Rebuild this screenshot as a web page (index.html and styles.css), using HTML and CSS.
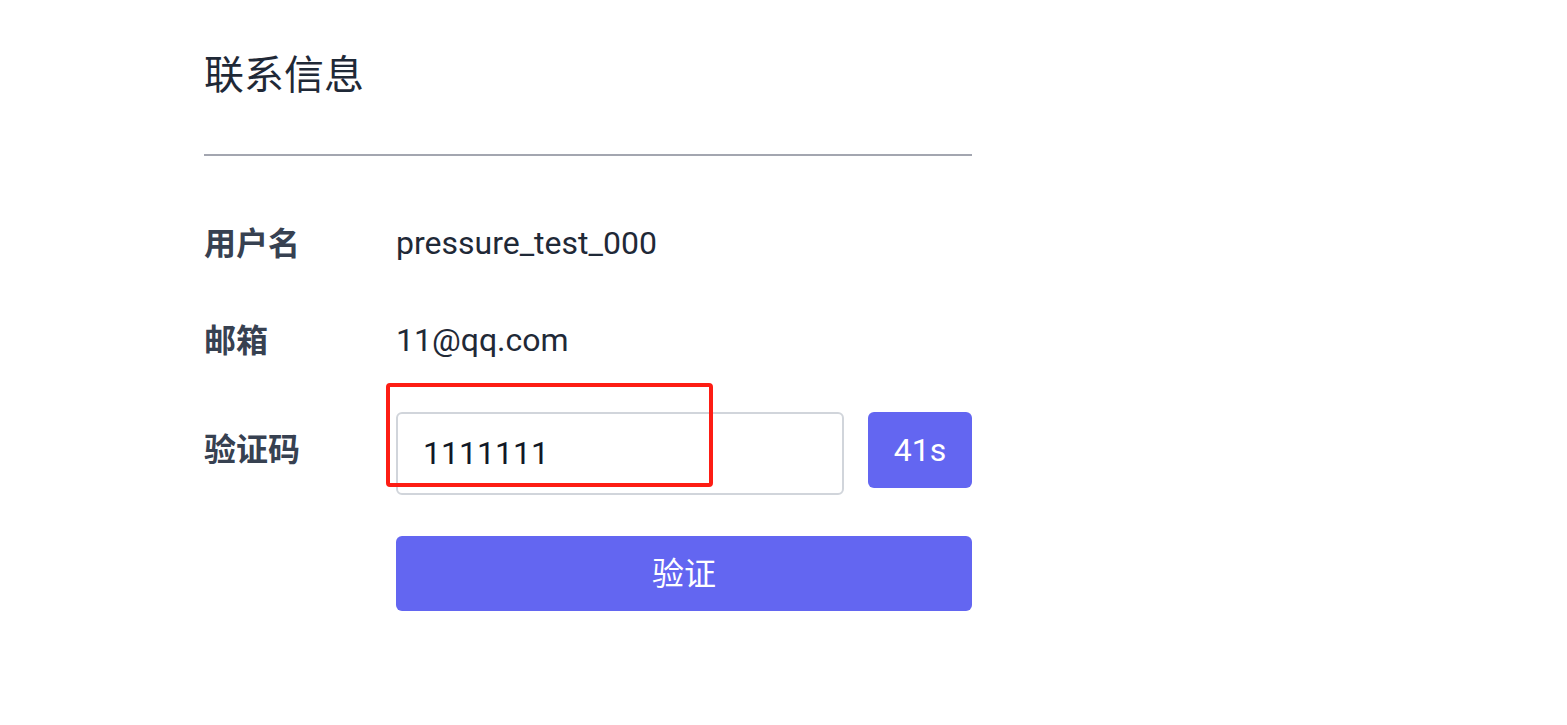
FILE: index.html
```html
<!DOCTYPE html>
<html lang="zh">
<head>
<meta charset="utf-8">
<link rel="stylesheet" href="styles.css">
</head>
<body>
<main class="panel">
  <h2 class="title">联系信息</h2>
  <hr class="divider">
  <div class="row row-user">
    <div class="label">用户名</div>
    <div class="value">pressure_test_000</div>
  </div>
  <div class="row row-mail">
    <div class="label">邮箱</div>
    <div class="value">11@qq.com</div>
  </div>
  <div class="row row-code">
    <div class="label label-code">验证码</div>
    <div class="code-field">
      <div class="code-input">1111111</div>
      <div class="highlight"></div>
    </div>
    <button class="countdown">41s</button>
  </div>
  <div class="row row-submit">
    <div class="label"></div>
    <button class="submit">验证</button>
  </div>
</main>
</body>
</html>
```
FILE: styles.css
```css
html, body {
  margin: 0;
  padding: 0;
  background: #ffffff;
}
body {
  font-family: Roboto, "Noto Sans CJK SC", sans-serif;
  color: #1f2937;
}
.panel {
  width: 768px;
  margin-left: 204px;
  padding-top: 48px;
}
.title {
  margin: 0;
  font-size: 40px;
  line-height: 56px;
  font-weight: 400;
  color: #1f2937;
}
.divider {
  margin: 50px 0 0 0;
  border: 0;
  height: 2px;
  background: #a3a6b0;
}
.row {
  display: flex;
  align-items: center;
}
.row-user {
  margin-top: 55px;
  height: 64px;
}
.row-mail {
  margin-top: 33px;
  height: 64px;
}
.label {
  width: 192px;
  flex: none;
  font-size: 32px;
  font-weight: 700;
  color: #374151;
  line-height: 48px;
  padding-top: 2px;
}
.value {
  font-size: 32px;
  line-height: 48px;
  color: #1f2937;
}
.row-code {
  margin-top: 40px;
  align-items: flex-start;
}
.label-code {
  margin-top: 12px;
}
.code-field {
  position: relative;
  width: 448px;
  flex: none;
}
.code-input {
  box-sizing: border-box;
  height: 83px;
  border: 2px solid #d1d5db;
  border-radius: 6px;
  padding: 0 25px;
  font-size: 32px;
  line-height: 79px;
  color: #111827;
  background: #fff;
}
.highlight {
  position: absolute;
  left: -10px;
  top: -29px;
  width: 327px;
  height: 104px;
  box-sizing: border-box;
  border: 4px solid #fd1d14;
  border-radius: 4px;
}
.countdown {
  margin-left: 24px;
  width: 104px;
  height: 76px;
  border: 0;
  border-radius: 6px;
  background: #6366f1;
  color: #ffffff;
  font-family: Roboto, "Noto Sans CJK SC", sans-serif;
  font-size: 32px;
  padding: 0;
}
.row-submit {
  margin-top: 41px;
}
.submit {
  width: 576px;
  height: 75px;
  border: 0;
  border-radius: 6px;
  background: #6366f1;
  color: #ffffff;
  font-family: Roboto, "Noto Sans CJK SC", sans-serif;
  font-size: 32px;
  padding: 0 0 5px 0;
}
```
